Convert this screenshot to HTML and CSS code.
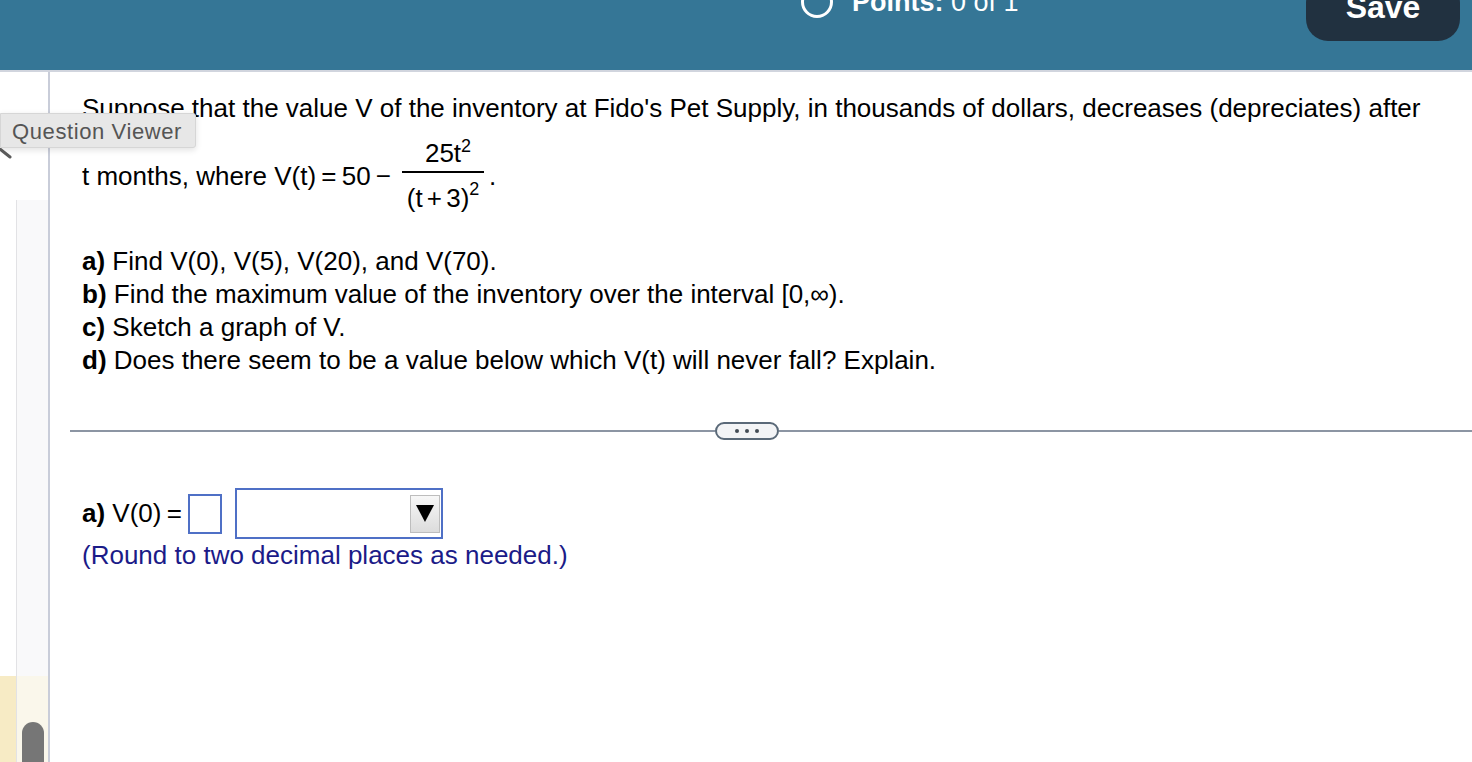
FILE: index.html
```html
<!DOCTYPE html>
<html>
<head>
<meta charset="utf-8">
<link rel="stylesheet" href="styles.css">
</head>
<body>
<header class="topbar">
  <div class="points">
    <span class="ring"></span>
    <span class="points-text"><b>Points:</b> 0 of 1</span>
  </div>
  <button class="save">Save</button>
</header>
<div class="body">
  <aside class="side">
    <div class="side-a">
      <div class="side-a-fill"></div>
      <div class="side-a-yellow"></div>
    </div>
    <div class="side-b">
      <div class="side-b-top"></div>
      <div class="strip">
        <div class="strip-fill"></div>
        <div class="strip-bottom"><div class="thumb"></div></div>
      </div>
    </div>
  </aside>
  <main class="main">
    <p class="stem">Suppose that the value V of the inventory at Fido's Pet Supply, in thousands of dollars, decreases (depreciates) after<br>t months, where <span class="math">V(t) = 50 −</span><span class="frac"><span class="num">25t<sup class="s1">2</sup></span><span class="bar"></span><span class="den">(t + 3)<sup class="s2">2</sup></span></span>.</p>
    <div class="parts">
      <div><b>a)</b> Find V(0), V(5), V(20), and V(70).</div>
      <div><b>b)</b> Find the maximum value of the inventory over the interval [0,∞).</div>
      <div><b>c)</b> Sketch a graph of V.</div>
      <div><b>d)</b> Does there seem to be a value below which V(t) will never fall? Explain.</div>
    </div>
    <div class="sep">
      <span class="sep-line sep-left"></span>
      <span class="pill"><i></i><i></i><i></i></span>
      <span class="sep-line"></span>
    </div>
    <div class="answer">
      <span class="lbl"><b>a)</b> <span class="math">V(0) =</span></span>
      <span class="inbox"></span>
      <span class="select"><span class="arrow"><span class="tri"></span></span></span>
    </div>
    <div class="hint">(Round to two decimal places as needed.)</div>
  </main>
  <div class="tooltip">Question Viewer</div>
  <svg class="cursor" width="14" height="14" viewBox="0 0 14 14"><path d="M0 1 L10 9" stroke="#5a5a5a" stroke-width="3" stroke-linecap="round"/></svg>
</div>
</body>
</html>
```

FILE: styles.css
```css
html, body {
  margin: 0;
  padding: 0;
  height: 100%;
  overflow: hidden;
  background: #fff;
  font-family: "Liberation Sans", Arial, sans-serif;
}
.topbar {
  height: 70px;
  background: #357696;
  border-bottom: 2px solid #d1d5de;
  display: flex;
  justify-content: flex-end;
  align-items: flex-start;
  padding-right: 12px;
  overflow: hidden;
}
.points {
  width: 505px;
  display: flex;
  align-items: flex-start;
  color: #fff;
}
.ring {
  width: 26px;
  height: 26px;
  border: 3px solid #fff;
  border-radius: 50%;
  margin-top: -14px;
  flex: none;
}
.points-text {
  margin-left: 19px;
  font-size: 27px;
  line-height: 27px;
  margin-top: -11px;
  white-space: nowrap;
}
.save {
  width: 154px;
  height: 60px;
  margin-top: -19px;
  border: none;
  border-radius: 22px;
  background: #213140;
  color: #fff;
  font-family: "Liberation Sans", Arial, sans-serif;
  font-weight: bold;
  font-size: 32px;
  line-height: 53px;
  padding: 0 0 7px 0;
  box-sizing: border-box;
}
.body {
  position: relative;
  display: flex;
  height: calc(100% - 72px);
}
.side {
  width: 48px;
  border-right: 2px solid #c9cdd9;
  display: flex;
  flex: none;
}
.side-a {
  width: 16px;
  display: flex;
  flex-direction: column;
}
.side-a-fill { flex: 1; }
.side-a-yellow { height: 86px; background: #f7ebc5; }
.side-b {
  width: 32px;
  display: flex;
  flex-direction: column;
}
.side-b-top { height: 128px; }
.strip {
  flex: 1;
  display: flex;
  flex-direction: column;
  border-left: 1px solid #e2e2e5;
  background: #f9f9fa;
}
.strip-fill { flex: 1; }
.strip-bottom {
  height: 86px;
  background: #faf7eb;
  overflow: hidden;
}
.thumb {
  width: 22px;
  height: 60px;
  margin: 46px 0 0 5px;
  background: #767676;
  border-radius: 11px 11px 0 0;
}
.main {
  flex: 1;
  padding: 20px 0 0 32px;
  color: #000;
  font-size: 26px;
  line-height: 33px;
}
.stem {
  margin: 0;
}
.math {
  word-spacing: -2px;
}
.frac {
  display: inline-flex;
  flex-direction: column;
  align-items: center;
  vertical-align: 23px;
  margin: 15px 5px 0 11px;
}
.num, .den {
  line-height: 26px;
  white-space: nowrap;
  word-spacing: -3px;
}
.num { padding-left: 10px; }
.bar {
  width: 82px;
  height: 2px;
  background: #000;
  margin: 5px 0 12px;
}
sup {
  font-size: 18px;
  line-height: 0;
  position: relative;
  vertical-align: baseline;
}
.s1 { top: -10px; }
.s2 { top: -12px; }
.parts {
  margin-top: 34px;
}
.sep {
  display: flex;
  align-items: center;
  margin: 45px 0 0 -12px;
  height: 18px;
}
.sep-line {
  flex: 1;
  height: 2px;
  background: #8c95a3;
}
.sep-left {
  flex: none;
  width: 645px;
}
.pill {
  width: 60px;
  height: 14px;
  border: 2px solid #5a6978;
  border-radius: 9px;
  background: #f3f4f6;
  display: flex;
  align-items: center;
  justify-content: center;
  gap: 6px;
}
.pill i {
  width: 4px;
  height: 4px;
  border-radius: 50%;
  background: #444c55;
}
.answer {
  display: flex;
  align-items: center;
  margin-top: 48px;
  height: 51px;
}
.inbox {
  width: 30px;
  height: 36px;
  border: 2px solid #4f70c6;
  margin-left: 6px;
}
.select {
  width: 203px;
  height: 47px;
  border: 2px solid #4f70c6;
  margin-left: 13px;
  display: flex;
  justify-content: flex-end;
  align-items: center;
  padding-right: 1px;
}
.arrow {
  width: 28px;
  height: 36px;
  border: 1px solid #bdbdbd;
  background: linear-gradient(#f7f7f7, #dcdcdc);
  display: flex;
  align-items: center;
  justify-content: center;
}
.tri {
  width: 0;
  height: 0;
  border-left: 9px solid transparent;
  border-right: 9px solid transparent;
  border-top: 17px solid #000;
}
.hint {
  color: #1b1b88;
}
.tooltip {
  position: absolute;
  left: 0;
  top: 41px;
  height: 35px;
  padding-left: 11px;
  background: #e7e7e7;
  border: 1px solid #d6d6d6;
  border-radius: 0 3px 3px 0;
  box-shadow: 0 2px 6px rgba(0,0,0,0.12);
  color: #555;
  font-family: "Liberation Sans", Arial, sans-serif;
  font-size: 22px;
  line-height: 35px;
  letter-spacing: 0.6px;
  white-space: nowrap;
  box-sizing: border-box;
  width: 196px;
}
.cursor {
  position: absolute;
  left: 0;
  top: 76px;
}
```
